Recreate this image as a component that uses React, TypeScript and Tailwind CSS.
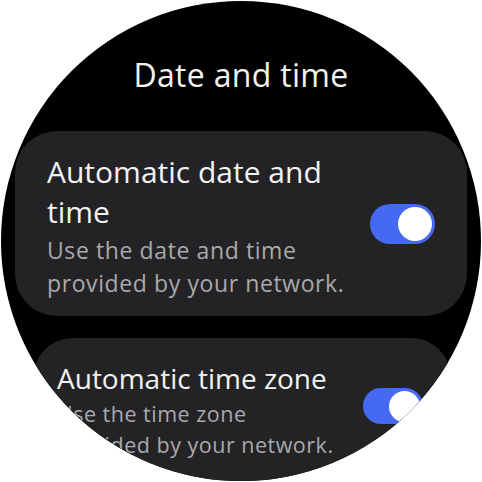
import React from 'react';

function Toggle({ small = false }: { small?: boolean }) {
  return (
    <div
      className={
        small
          ? 'w-[60px] h-[36px] rounded-full bg-[#4569f2] flex items-center justify-end pr-[3px] shrink-0'
          : 'w-[65px] h-[40px] rounded-full bg-[#4569f2] flex items-center justify-end pr-[3px] shrink-0'
      }
    >
      <div className={small ? 'w-[31px] h-[31px] rounded-full bg-white' : 'w-[34px] h-[34px] rounded-full bg-white'} />
    </div>
  );
}

export default function App() {
  return (
    <div className="w-[482px] h-[482px] bg-white p-[1px]" style={{ fontFamily: '"Open Sans", "Noto Sans", sans-serif' }}>
      <div className="w-[480px] h-[480px] rounded-full bg-black overflow-hidden flex flex-col">
        <h1 className="pt-[53px] text-center text-[32px] leading-[42px] tracking-[0.3px] text-[#f2f2f2]">Date and time</h1>

        <div className="mt-[35px] mx-[14px] h-[185px] rounded-[42px] bg-[#232325] flex items-center pl-[32px] pr-[32px] shrink-0">
          <div className="w-[318px] pt-[4px]">
            <div className="text-[30px] leading-[40px] text-[#f2f2f2]">
              Automatic date and
              <br />
              time
            </div>
            <div className="mt-[2px] text-[23px] leading-[33px] tracking-[0.6px] whitespace-nowrap text-[#a9a9ab]">
              Use the date and time
              <br />
              provided by your network.
            </div>
          </div>
          <div className="flex-1" />
          <Toggle />
        </div>

        <div className="mt-[22px] ml-[32px] mr-[30px] h-[170px] rounded-[40px] bg-[#232325] flex items-start pl-[24px] pr-[28px] pt-[21px] shrink-0">
          <div className="w-[300px]">
            <div className="text-[28px] leading-[38px] whitespace-nowrap text-[#f2f2f2]">Automatic time zone</div>
            <div className="mt-[1px] text-[21.5px] leading-[31px] tracking-[0.5px] whitespace-nowrap text-[#a9a9ab]">
              Use the time zone
              <br />
              provided by your network.
            </div>
          </div>
          <div className="flex-1" />
          <div className="pt-[29px]">
            <Toggle small />
          </div>
        </div>
      </div>
    </div>
  );
}
